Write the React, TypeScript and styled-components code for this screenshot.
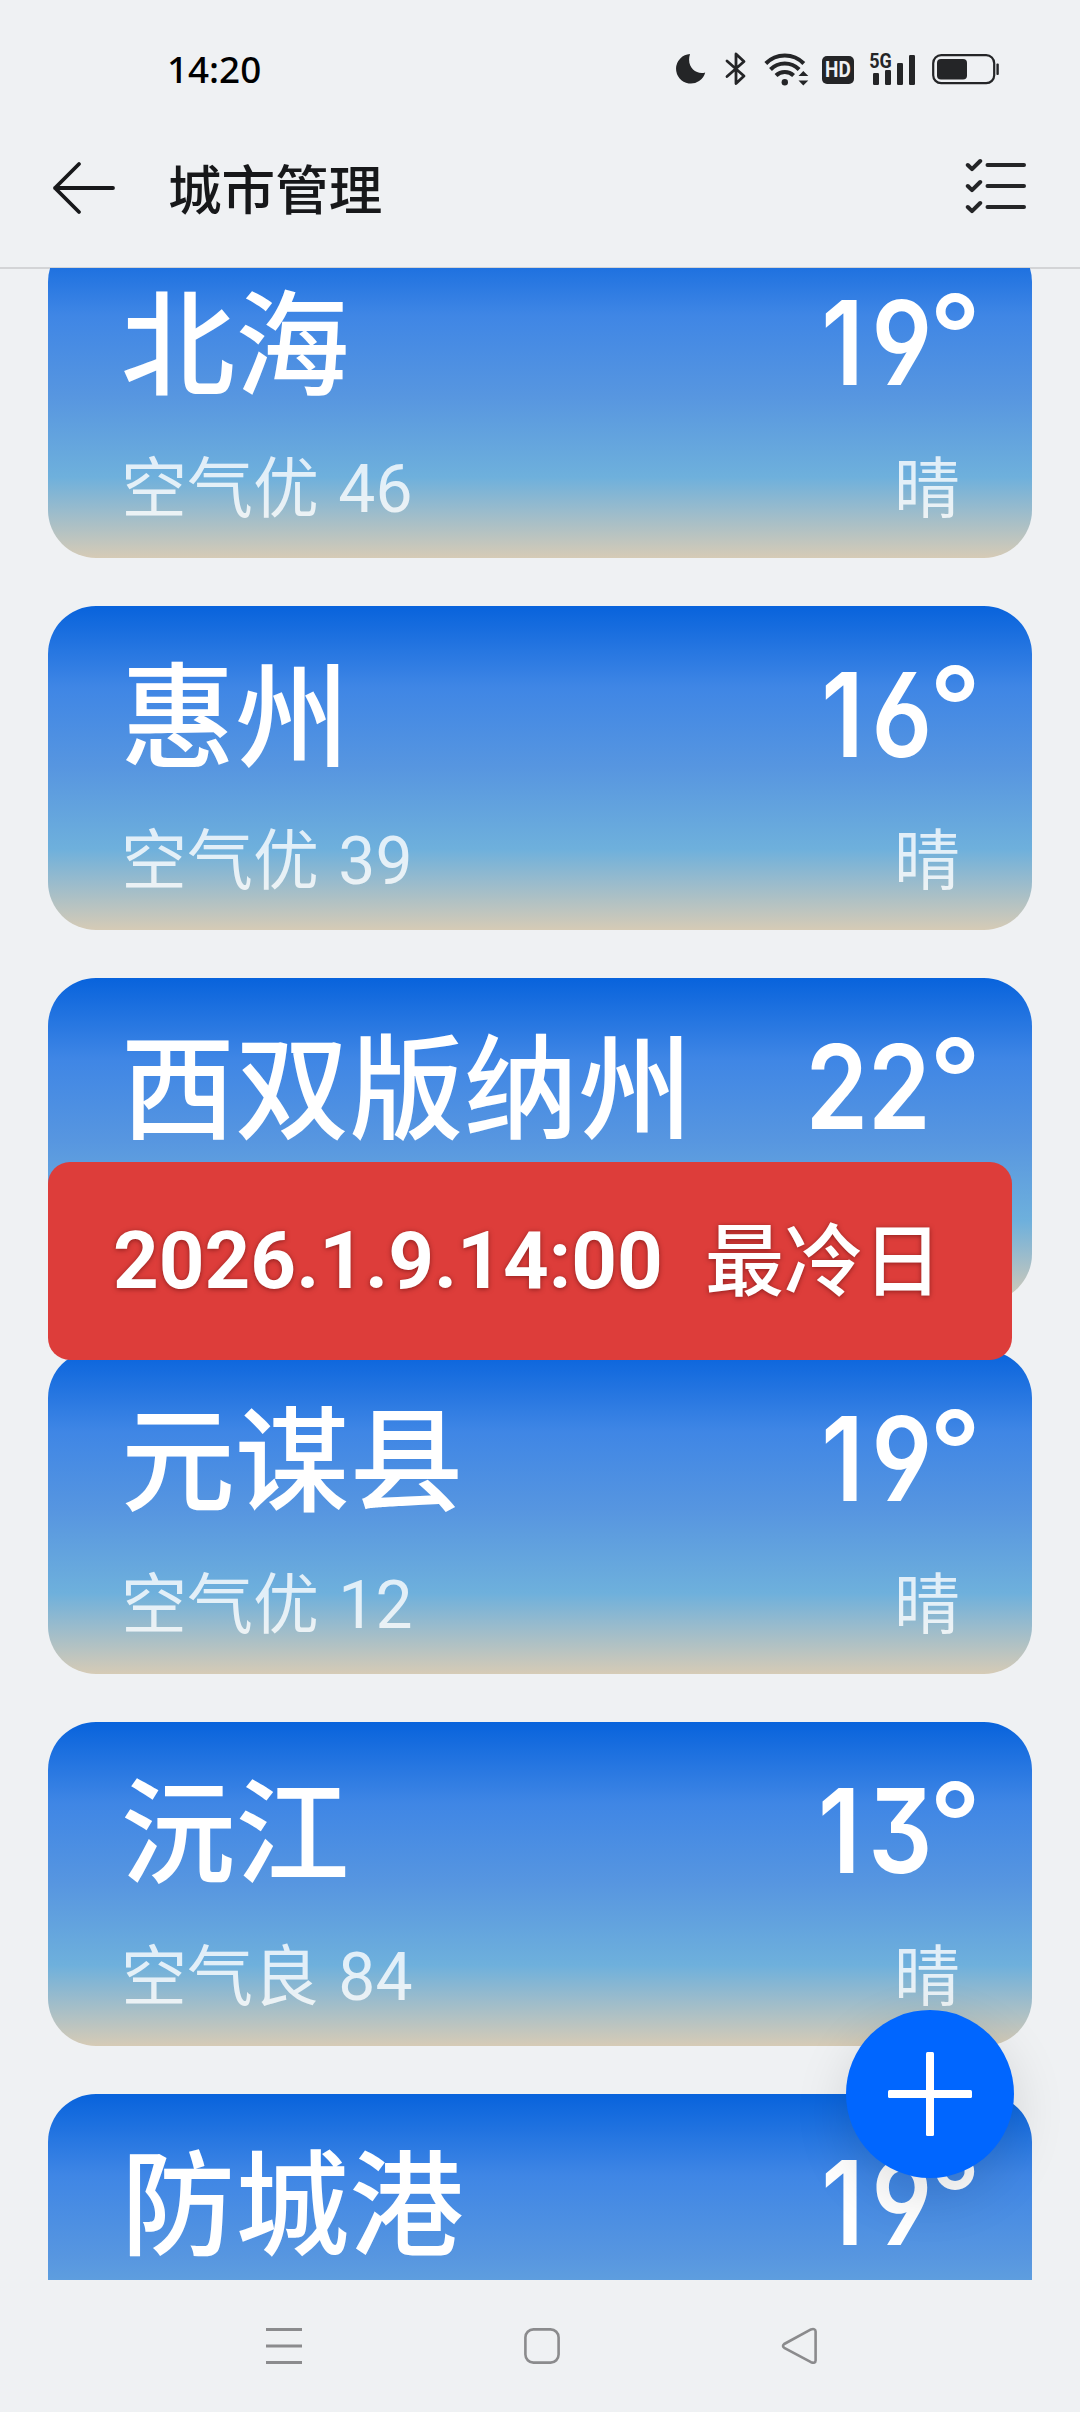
import React from "react";
import styled, { createGlobalStyle } from "styled-components";

const GlobalStyle = createGlobalStyle`
  * { box-sizing: border-box; }
  html, body { margin: 0; padding: 0; background: #eff1f3; }
`;

const cjk = `"Noto Sans CJK SC", sans-serif`;

const Screen = styled.main`
  position: relative;
  display: flex;
  flex-direction: column;
  width: 1080px;
  height: 2412px;
  overflow: hidden;
  background: #eff1f3;
  font-family: Roboto, ${cjk};
`;

const StatusBar = styled.div`
  flex: none;
  display: flex;
  align-items: center;
  justify-content: space-between;
  height: 108px;
  padding: 29px 80px 0 167px;
`;

const Clock = styled.time`
  font: 500 36.8px/52px "Noto Sans", ${cjk};
  color: #000;
`;

const StatusIcons = styled.div`
  display: flex;
  align-items: center;
  height: 40px;
  color: #242527;
  svg { display: block; flex: none; }
`;

const HdBadge = styled.span`
  display: flex;
  align-items: center;
  justify-content: center;
  width: 32px;
  height: 28px;
  margin: 3px 15px 0 12px;
  border-radius: 5px;
  background: #242527;
  color: #eff1f3;
  font: 700 22px/28px Roboto, sans-serif;
  span { transform: scaleX(0.86); }
`;

const Header = styled.header`
  flex: none;
  display: flex;
  align-items: center;
  height: 161px;
  padding: 0 52px 0 52px;
  border-bottom: 2px solid #d3d4d6;
  svg { display: block; flex: none; }
`;

const Title = styled.h1`
  flex: 1;
  margin: 0 0 2px 52px;
  font: 500 53.6px/80px ${cjk};
  color: #17181a;
`;

const List = styled.section`
  flex: none;
  height: 2012px;
  margin-top: -1px;
  overflow: hidden;
  padding: 0 48px;
`;

const Cards = styled.div`
  display: flex;
  flex-direction: column;
  gap: 48px;
  margin-top: -34px;
`;

const Card = styled.article`
  display: flex;
  flex-direction: column;
  height: 324px;
  padding: 37px 54px 0 73px;
  border-radius: 48px;
  background: linear-gradient(
    180deg,
    #0863dc 0%,
    #3f86e5 25%,
    #5796e0 50%,
    #6eb0dc 75%,
    #d6cbb6 100%
  );
`;

const Row = styled.div`
  display: flex;
  justify-content: space-between;
`;

const City = styled.h2`
  margin: 0;
  font: 500 114px/132px ${cjk};
  letter-spacing: 0.3px;
  color: #fff;
`;

const Temp = styled.div`
  display: flex;
  height: 132px;
  color: #fff;
`;

const Digits = styled.span<{ $spacing: number }>`
  margin-right: ${(p) => 1 - p.$spacing}px;
  padding-top: 6px;
  font: 600 117px/132px Inter, sans-serif;
  font-feature-settings: "cv03", "cv04", "cv09";
  letter-spacing: ${(p) => p.$spacing}px;
  transform: scaleX(0.86);
  transform-origin: right;
`;

const Degree = styled.span`
  margin: -7px 0 0 0;
  font: 700 110px/132px Lato, sans-serif;
`;

const Detail = styled.p`
  margin: 41px 0 0;
  font: 400 66px/92px Roboto, ${cjk};
  word-spacing: 3px;
  color: rgba(255, 255, 255, 0.8);
`;

const Weather = styled(Detail)`
  margin-right: 18px;
`;

const Banner = styled.aside`
  position: absolute;
  left: 48px;
  top: 1162px;
  display: flex;
  align-items: center;
  width: 964px;
  height: 198px;
  padding-left: 65px;
  border-radius: 22px;
  background: #dd3d3a;
  color: #fff;
  white-space: pre;
  text-shadow: 0 1px 5px rgba(60, 0, 0, 0.5);
`;

const BannerDate = styled.span`
  width: 592px;
  font: 700 79.8px/100px Roboto, sans-serif;
`;

const BannerLabel = styled.span`
  margin-bottom: 11px;
  font: 500 79px/100px ${cjk};
`;

const AddButton = styled.button`
  position: absolute;
  left: 846px;
  top: 2010px;
  display: flex;
  align-items: center;
  justify-content: center;
  width: 168px;
  height: 168px;
  padding: 0;
  border: 0;
  border-radius: 50%;
  background: #0066ff;
  box-shadow: 0 18px 54px rgba(0, 0, 0, 0.13);
`;

const NavBar = styled.nav`
  flex: 1;
  display: flex;
  justify-content: space-between;
  align-items: center;
  padding: 0 260px 0 264px;
`;

interface CityWeather {
  name: string;
  temp: number;
  air?: string;
  weather?: string;
}

const cities: CityWeather[] = [
  { name: "北海", temp: 19, air: "空气优 46", weather: "晴" },
  { name: "惠州", temp: 16, air: "空气优 39", weather: "晴" },
  { name: "西双版纳州", temp: 22 },
  { name: "元谋县", temp: 19, air: "空气优 12", weather: "晴" },
  { name: "沅江", temp: 13, air: "空气良 84", weather: "晴" },
  { name: "防城港", temp: 19 },
];

// Inter's "1" is narrow, so temperatures in the teens need wider tracking.
const digitSpacing = (temp: number) => (temp < 20 ? 9 : 0);

const Moon = () => (
  <svg width="30" height="32" viewBox="0 0 30 32">
    <path d="M14 1 A14.8 14.8 0 1 0 29.2 19.4 C21 22 9.8 15 14 1Z" fill="currentColor" />
  </svg>
);

const BluetoothSvg = styled.svg`
  margin-left: 18px;
`;

const Bluetooth = () => (
  <BluetoothSvg width="24" height="36" viewBox="0 0 24 36">
    <path d="M3 10 L20 25 L12 32.5 V3 L20 10.5 L3 25.5" fill="none" stroke="currentColor" strokeWidth="2.8" strokeLinejoin="round" strokeLinecap="round" />
  </BluetoothSvg>
);

const WifiSvg = styled.svg`
  margin-left: 16px;
`;

const Wifi = () => (
  <WifiSvg width="46" height="36" viewBox="0 0 46 36">
    <g fill="none" stroke="currentColor" strokeWidth="4">
      <path d="M1.8 12.5 A26.5 26.5 0 0 1 39.8 12.5" />
      <path d="M6.5 18.5 A20 20 0 0 1 35.1 18.5" />
      <path d="M12 24.5 A12.5 12.5 0 0 1 29.6 24.5" />
    </g>
    <circle cx="20.8" cy="31.2" r="3.2" fill="currentColor" />
    <path d="M34.5 25 L39.3 20 L44.3 25Z M34.5 29.5 L39.3 34.5 L44.3 29.5Z" fill="currentColor" />
  </WifiSvg>
);

const Signal = () => (
  <svg width="48" height="36" viewBox="0 0 48 36">
    <text x="0.3" y="16.6" fontFamily="Roboto, sans-serif" fontWeight="700" fontSize="20.5" textLength="22.5" lengthAdjust="spacingAndGlyphs" fill="currentColor">5G</text>
    <g fill="currentColor">
      <rect x="4" y="22" width="6" height="12" rx="1.2" />
      <rect x="16" y="19" width="6" height="15" rx="1.2" />
      <rect x="28" y="12" width="6" height="22" rx="1.2" />
      <rect x="40" y="4" width="6" height="30" rx="1.2" />
    </g>
  </svg>
);

const BatterySvg = styled.svg`
  margin-left: 15px;
`;

const Battery = () => (
  <BatterySvg width="68" height="32" viewBox="0 0 68 32">
    <rect x="1.2" y="2.2" width="61" height="28" rx="8" fill="none" stroke="currentColor" strokeWidth="2.2" />
    <rect x="5" y="6" width="30" height="20.5" rx="4" fill="currentColor" />
    <rect x="64.4" y="10.5" width="2.4" height="11.5" rx="1" fill="currentColor" />
  </BatterySvg>
);

const BackArrow = () => (
  <svg width="64" height="56" viewBox="0 0 64 56">
    <path d="M61 28 H3 M27 4 L3 28 L27 52" fill="none" stroke="#17181a" strokeWidth="3.8" strokeLinecap="round" strokeLinejoin="round" />
  </svg>
);

const Checklist = () => (
  <svg width="64" height="60" viewBox="964 158 64 60">
    {[165, 186, 207].map((y) => (
      <path key={y} d={`M987.5 ${y} H1024 M967.8 ${y} L972 ${y + 4.2} L980.2 ${y - 4}`} fill="none" stroke="#242527" strokeWidth="4" strokeLinecap="round" strokeLinejoin="round" />
    ))}
  </svg>
);

export default function App() {
  return (
    <Screen>
      <GlobalStyle />
      <StatusBar>
        <Clock>14:20</Clock>
        <StatusIcons>
          <Moon />
          <Bluetooth />
          <Wifi />
          <HdBadge><span>HD</span></HdBadge>
          <Signal />
          <Battery />
        </StatusIcons>
      </StatusBar>
      <Header>
        <BackArrow />
        <Title>城市管理</Title>
        <Checklist />
      </Header>
      <List>
        <Cards>
          {cities.map((c) => (
            <Card key={c.name}>
              <Row>
                <City>{c.name}</City>
                <Temp>
                  <Digits $spacing={digitSpacing(c.temp)}>{c.temp}</Digits>
                  <Degree>°</Degree>
                </Temp>
              </Row>
              {c.air && (
                <Row>
                  <Detail>{c.air}</Detail>
                  <Weather>{c.weather}</Weather>
                </Row>
              )}
            </Card>
          ))}
        </Cards>
      </List>
      <NavBar>
        <svg width="40" height="40" viewBox="0 0 40 40">
          <path d="M2 3.5 H38 M2 20 H38 M2 36.5 H38" stroke="#8b8b8d" strokeWidth="3" />
        </svg>
        <svg width="40" height="40" viewBox="0 0 40 40">
          <rect x="3.4" y="3.4" width="33.2" height="33.2" rx="8" fill="none" stroke="#8b8b8d" strokeWidth="2.6" />
        </svg>
        <svg width="40" height="40" viewBox="0 0 40 40">
          <path d="M4.2 18 L31 3.4 Q35.5 2.2 35.6 5.5 V34.5 Q35.5 37.8 31 36.2 L4.2 21.8 Q1.8 20 4.2 18Z" fill="none" stroke="#8b8b8d" strokeWidth="2.6" strokeLinejoin="round" />
        </svg>
      </NavBar>
      <Banner>
        <BannerDate>2026.1.9.14:00</BannerDate>
        <BannerLabel>最冷日</BannerLabel>
      </Banner>
      <AddButton aria-label="添加城市">
        <svg width="84" height="84" viewBox="0 0 84 84">
          <rect x="0" y="38" width="84" height="8" rx="1.5" fill="#fff" />
          <rect x="38" y="0" width="8" height="84" rx="1.5" fill="#fff" />
        </svg>
      </AddButton>
    </Screen>
  );
}
